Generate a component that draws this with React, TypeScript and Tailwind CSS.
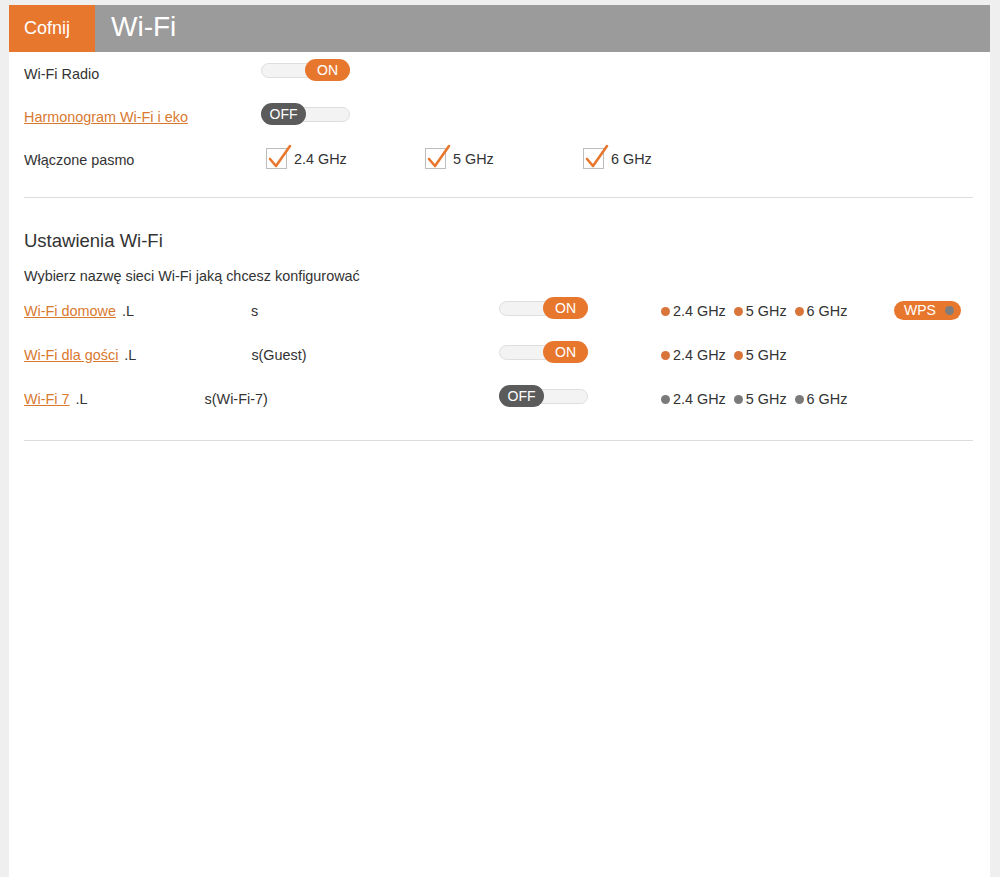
import React from 'react';

const ORANGE = 'bg-[#e8772e]';

const Toggle = ({ on }: { on: boolean }) => (
  <div className="relative w-[89px] h-[22px] flex items-center">
    {/* track */}
    <div className="w-full h-[15px] rounded-full bg-[#f3f3f3] border border-[#dedede]"></div>
    {on ? (
      <div className={`absolute right-0 top-0 h-[22px] w-[45px] rounded-full ${ORANGE} flex items-center justify-center text-white text-[14px]`}>
        ON
      </div>
    ) : (
      <div className="absolute left-0 top-0 h-[22px] w-[45px] rounded-full bg-[#5b5b5b] flex items-center justify-center text-white text-[14px]">
        OFF
      </div>
    )}
  </div>
);

const Check = ({ label }: { label: string }) => (
  <div className="flex items-center gap-[7px]">
    <div className="relative w-[21px] h-[21px] border border-[#bdbdbd] bg-white">
      <svg className="absolute -top-[5px] left-[1px]" width="24" height="26" viewBox="0 0 24 26">
        <path d="M2 15 L8 22 L22 2" fill="none" stroke="#e8772e" strokeWidth="2.6" strokeLinecap="round" strokeLinejoin="round" />
      </svg>
    </div>
    <span className="text-[14.4px] text-[#333] mt-[2px]">{label}</span>
  </div>
);

const Bands = ({ bands, active }: { bands: string[]; active: boolean }) => (
  <div className="flex items-center gap-[8px] text-[14.4px] text-[#333]">
    {bands.map((b) => (
      <span key={b} className="flex items-center gap-[3px]">
        <span className={`inline-block w-[9px] h-[9px] rounded-full ${active ? 'bg-[#d9743a]' : 'bg-[#7a7a7a]'}`}></span>
        {b}
      </span>
    ))}
  </div>
);

const networks = [
  { name: 'Wi-Fi domowe', prefix: '.L', suffix: 's', suffixAt: 'ml-[117px]', on: true, bands: ['2.4 GHz', '5 GHz', '6 GHz'], wps: true },
  { name: 'Wi-Fi dla gości', prefix: '.L', suffix: 's(Guest)', suffixAt: 'ml-[115px]', on: true, bands: ['2.4 GHz', '5 GHz'], wps: false },
  { name: 'Wi-Fi 7', prefix: '.L', suffix: 's(Wi-Fi-7)', suffixAt: 'ml-[117px]', on: false, bands: ['2.4 GHz', '5 GHz', '6 GHz'], wps: false },
];

export default function App() {
  return (
    <div className="min-h-screen bg-[#efefef] pt-[5px] font-['Liberation_Sans',Arial,sans-serif]">
      <div className="ml-[9px] w-[981px] min-h-[872px] bg-white">
        {/* Header */}
        <header className="flex h-[47px] bg-[#9b9b9b]">
          <button className={`w-[86px] ${ORANGE} text-white text-[18px] text-left pl-[15px]`}>Cofnij</button>
          <h1 className="pl-[16px] text-white text-[28px] leading-[44px]">Wi-Fi</h1>
        </header>

        <div className="pl-[15px] pr-[17px]">
          {/* Global settings */}
          <div className="flex items-center h-[44px] pt-[2px]">
            <span className="w-[237px] text-[14.4px] text-[#333]">Wi-Fi Radio</span>
            <div className="mb-[10px]"><Toggle on={true} /></div>
          </div>
          <div className="flex items-center h-[44px]">
            <a href="#" className="w-[237px] text-[14.4px] text-[#d9792f] underline">Harmonogram Wi-Fi i eko</a>
            <div className="mb-[8px]"><Toggle on={false} /></div>
          </div>
          <div className="flex items-center h-[40px] pt-[2px]">
            <span className="w-[242px] text-[14.4px] text-[#333]">Włączone pasmo</span>
            <div className="flex items-center mb-[4px]">
              <div className="w-[159px]"><Check label="2.4 GHz" /></div>
              <div className="w-[158px]"><Check label="5 GHz" /></div>
              <Check label="6 GHz" />
            </div>
          </div>

          <div className="mt-[17px] border-t border-[#dcdcdc]"></div>

          {/* Wi-Fi settings */}
          <h2 className="mt-[31px] text-[18.5px] text-[#333] leading-[24px]">Ustawienia Wi-Fi</h2>
          <p className="mt-[14px] text-[14.4px] text-[#333] leading-[18px]">Wybierz nazwę sieci Wi-Fi jaką chcesz konfigurować</p>

          <div className="mt-[5px]">
            {networks.map((n) => (
              <div key={n.name} className="flex items-center h-[44px]">
                <div className="w-[475px] flex items-center text-[14.4px] text-[#333]">
                  <a href="#" className="text-[#d9792f] underline">{n.name}</a>
                  <span className="ml-[6px]">{n.prefix}</span>
                  <span className={n.suffixAt}>{n.suffix}</span>
                </div>
                <div className="w-[162px] mb-[8px]"><Toggle on={n.on} /></div>
                <div className="w-[233px]"><Bands bands={n.bands} active={n.on} /></div>
                {n.wps && (
                  <div className={`mb-[4px] h-[19px] w-[67px] rounded-full ${ORANGE} flex items-center pl-[10px] gap-[9px] text-white text-[14px]`}>
                    WPS
                    <span className="inline-block w-[9px] h-[9px] rounded-full bg-[#7d7d7d]"></span>
                  </div>
                )}
              </div>
            ))}
          </div>

          <div className="mt-[18px] border-t border-[#dcdcdc]"></div>
        </div>
      </div>
    </div>
  );
}
